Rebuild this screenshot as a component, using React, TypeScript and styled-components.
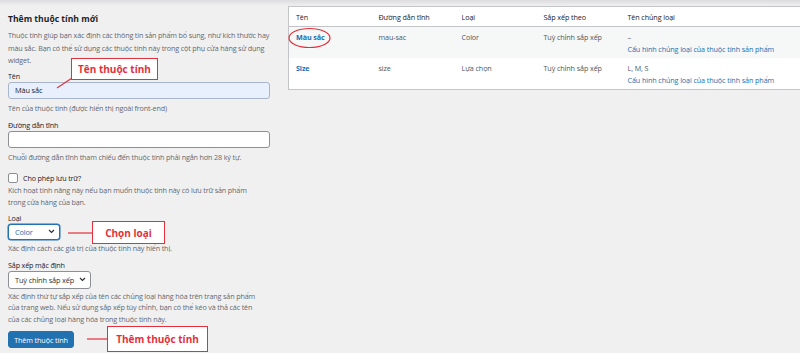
import styled, { createGlobalStyle } from "styled-components";

const GlobalStyle = createGlobalStyle`
  html, body { margin: 0; padding: 0; }
  body {
    width: 800px;
    height: 353px;
    overflow: hidden;
    background: linear-gradient(#dcdcde 0, #f0f0f1 6px);
    font-family: "Open Sans", "Liberation Sans", sans-serif;
    color: #3c434a;
  }
`;

const Page = styled.div`
  position: relative;
  display: flex;
  gap: 18px;
  padding-left: 8px;
  height: 353px;
`;

const FormCol = styled.div`
  width: 262px;
  flex-shrink: 0;
  letter-spacing: -0.15px;
`;

const Title = styled.h2`
  margin: 13px 0 4px;
  font-size: 8.6px;
  line-height: 12px;
  font-weight: 700;
  color: #1d2327;
  letter-spacing: 0;
`;

const Desc = styled.p<{ $lh?: number; $mb?: number }>`
  margin: 0 0 ${p => p.$mb ?? 0}px;
  font-size: 7.2px;
  line-height: ${p => p.$lh ?? 12.5}px;
  color: #646970;
`;

const Label = styled.label<{ $mt?: number }>`
  display: block;
  margin-top: ${p => p.$mt ?? 0}px;
  font-size: 7.2px;
  line-height: 11px;
  color: #1d2327;
`;

const TextInput = styled.div<{ $filled?: boolean }>`
  box-sizing: border-box;
  height: 17px;
  margin-bottom: 3px;
  padding: 0 6px;
  display: flex;
  align-items: center;
  border: 1px solid ${p => (p.$filled ? "#a9b6ca" : "#8c8f94")};
  border-radius: 3px;
  background: ${p => (p.$filled ? "#e8f0fe" : "#fff")};
  font-size: 7.4px;
  color: #1d2327;
`;

const CheckRow = styled.div`
  display: flex;
  align-items: center;
  gap: 5px;
  margin-top: 9px;
  height: 12px;
  font-size: 7.2px;
  color: #1d2327;
`;

const Box = styled.span`
  box-sizing: border-box;
  width: 10px;
  height: 10px;
  border: 1px solid #8c8f94;
  border-radius: 2px;
  background: #fff;
`;

const Select = styled.div<{ $focus?: boolean; $w: number; $h: number }>`
  box-sizing: border-box;
  width: ${p => p.$w}px;
  height: ${p => p.$h}px;
  margin-bottom: 2px;
  padding: 0 4px 0 6px;
  display: flex;
  align-items: center;
  justify-content: space-between;
  border: 1px solid ${p => (p.$focus ? "#2271b1" : "#8c8f94")};
  box-shadow: ${p => (p.$focus ? "0 0 0 0.5px #2271b1" : "none")};
  border-radius: 3px;
  background: #fff;
  font-size: 7.4px;
  color: ${p => (p.$focus ? "#2271b1" : "#2c3338")};
`;

const Button = styled.button`
  margin-top: 5px;
  height: 17px;
  width: 66px;
  padding: 0;
  border: 1px solid #2271b1;
  border-radius: 3px;
  background: #2271b1;
  color: #fff;
  font-family: inherit;
  font-size: 7.2px;
  letter-spacing: -0.1px;
`;

const TableWrap = styled.div`
  margin-top: 6px;
  flex: 1;
  margin-right: -10px;
  align-self: flex-start;
`;

const Table = styled.table`
  width: 100%;
  border-collapse: collapse;
  border: 1px solid #c3c4c7;
  background: #fff;
  table-layout: fixed;
  font-size: 7.2px;
  letter-spacing: -0.1px;
`;

const Th = styled.th<{ $w?: number }>`
  width: ${p => (p.$w ? `${p.$w}px` : "auto")};
  box-sizing: border-box;
  text-align: left;
  font-weight: 400;
  color: #1d2327;
  padding: 4px 7px 3px;
  line-height: 12px;
  border-bottom: 1px solid #c3c4c7;
`;

const Tr = styled.tr<{ $alt?: boolean }>`
  background: ${p => (p.$alt ? "#f6f7f7" : "#fff")};
`;

const Td = styled.td<{ $h: number }>`
  height: ${p => p.$h}px;
  box-sizing: border-box;
  vertical-align: top;
  padding: 4px 7px 0;
  line-height: 12px;
  color: #50575e;
`;

const NameLink = styled.a`
  color: #2271b1;
  font-weight: 700;
  text-decoration: none;
`;

const Link = styled.a`
  display: block;
  color: #2271b1;
  text-decoration: none;
`;

const Note = styled.div<{ $x: number; $y: number; $w: number; $h: number }>`
  position: absolute;
  left: ${p => p.$x}px;
  top: ${p => p.$y}px;
  width: ${p => p.$w}px;
  height: ${p => p.$h}px;
  box-sizing: border-box;
  border: 1.5px solid #e2313b;
  background: #fff;
  display: flex;
  align-items: center;
  justify-content: center;
  color: #e2313b;
  font-weight: 700;
  font-size: 10px;
`;

const Overlay = styled.svg`
  position: absolute;
  left: 0;
  top: 0;
  pointer-events: none;
`;

function Chevron({ color }: { color: string }) {
  return (
    <svg width="7" height="5" viewBox="0 0 7 5">
      <path d="M1 1 L3.5 3.5 L6 1" fill="none" stroke={color} strokeWidth="1.2" />
    </svg>
  );
}

export default function App() {
  return (
    <>
      <GlobalStyle />
      <Page>
        <FormCol>
          <Title>Thêm thuộc tính mới</Title>
          <Desc $mb={4}>
            Thuộc tính giúp bạn xác định các thông tin sản phẩm bổ sung, như kích thước hay màu sắc. Bạn có thể sử dụng các thuộc tính này trong cột phụ cửa hàng sử dụng widget.
          </Desc>
          <Label>Tên</Label>
          <TextInput $filled>Màu sắc</TextInput>
          <Desc $lh={12}>Tên của thuộc tính (được hiển thị ngoài front-end)</Desc>
          <Label $mt={6}>Đường dẫn tĩnh</Label>
          <TextInput />
          <Desc $lh={12}>Chuỗi đường dẫn tĩnh tham chiếu đến thuộc tính phải ngắn hơn 28 ký tự.</Desc>
          <CheckRow>
            <Box />
            Cho phép lưu trữ?
          </CheckRow>
          <Desc $mb={4}>
            Kích hoạt tính năng này nếu bạn muốn thuộc tính này có lưu trữ sản phẩm
            <br />
            trong cửa hàng của bạn.
          </Desc>
          <Label>Loại</Label>
          <Select $focus $w={52} $h={16}>
            Color
            <Chevron color="#2c3338" />
          </Select>
          <Desc $lh={12}>Xác định cách các giá trị của thuộc tính này hiển thị.</Desc>
          <Label $mt={6}>Sắp xếp mặc định</Label>
          <Select $w={83} $h={18}>
            Tuỳ chỉnh sắp xếp
            <Chevron color="#2c3338" />
          </Select>
          <Desc $lh={11.7}>
            Xác định thứ tự sắp xếp của tên các chủng loại hàng hóa trên trang sản phẩm
            <br />
            của trang web. Nếu sử dụng sắp xếp tùy chỉnh, bạn có thể kéo và thả các tên
            <br />
            của các chủng loại hàng hóa trong thuộc tính này.
          </Desc>
          <Button>Thêm thuộc tính</Button>
        </FormCol>

        <TableWrap>
          <Table>
            <thead>
              <tr>
                <Th $w={83}>Tên</Th>
                <Th $w={83}>Đường dẫn tĩnh</Th>
                <Th $w={82}>Loại</Th>
                <Th $w={84}>Sắp xếp theo</Th>
                <Th>Tên chủng loại</Th>
              </tr>
            </thead>
            <tbody>
              <Tr $alt>
                <Td $h={31}><NameLink>Màu sắc</NameLink></Td>
                <Td $h={31}>mau-sac</Td>
                <Td $h={31}>Color</Td>
                <Td $h={31}>Tuỳ chỉnh sắp xếp</Td>
                <Td $h={31}>
                  –
                  <Link>Cấu hình chủng loại của thuộc tính sản phẩm</Link>
                </Td>
              </Tr>
              <Tr>
                <Td $h={32}><NameLink>Size</NameLink></Td>
                <Td $h={32}>size</Td>
                <Td $h={32}>Lựa chọn</Td>
                <Td $h={32}>Tuỳ chỉnh sắp xếp</Td>
                <Td $h={32}>
                  L, M, S
                  <Link>Cấu hình chủng loại của thuộc tính sản phẩm</Link>
                </Td>
              </Tr>
            </tbody>
          </Table>
        </TableWrap>

        <Overlay width="800" height="353" viewBox="0 0 800 353">
          <g stroke="#e2313b" strokeWidth="1.2" fill="none">
            <line x1="57" y1="88" x2="72" y2="78" />
            <line x1="68" y1="233" x2="92" y2="233" />
            <line x1="87" y1="339" x2="107" y2="339" />
            <ellipse cx="309.5" cy="38" rx="20.5" ry="9.5" />
          </g>
        </Overlay>
        <Note $x={71} $y={58} $w={87} $h={22}>Tên thuộc tính</Note>
        <Note $x={92} $y={221} $w={73} $h={23}>Chọn loại</Note>
        <Note $x={107} $y={326} $w={101} $h={26}>Thêm thuộc tính</Note>
      </Page>
    </>
  );
}
